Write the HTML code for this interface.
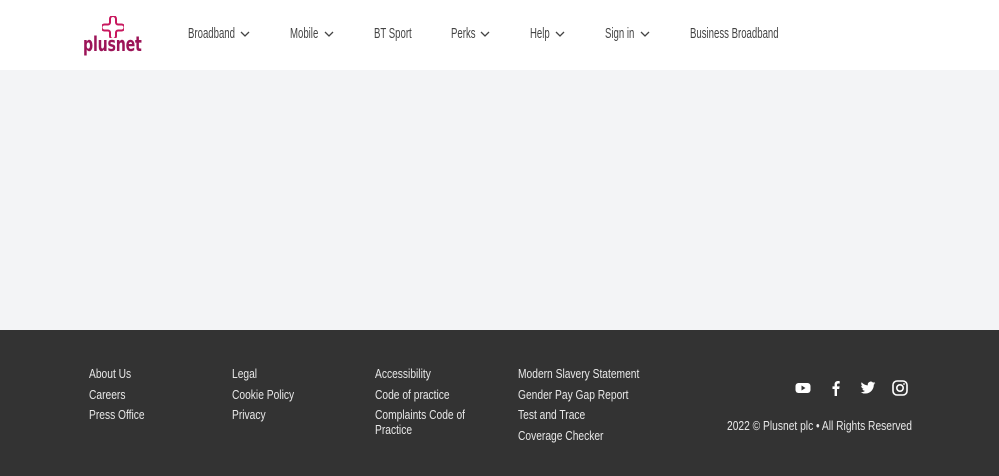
<!DOCTYPE html>
<html><head><meta charset="utf-8"><style>
*{margin:0;padding:0;box-sizing:border-box}
body{width:999px;height:476px;overflow:hidden;font-family:"Liberation Sans",sans-serif;background:#f3f4f6}
.hdr{position:absolute;left:0;top:0;width:999px;height:70px;background:#fff}
.logo-t{position:absolute;left:83px;top:32px;font-size:20px;font-weight:bold;color:#9c1458;font-family:"DejaVu Sans","Liberation Sans",sans-serif;transform:scaleX(0.71);transform-origin:left top;letter-spacing:-0.3px;white-space:nowrap}
.nav{position:absolute;top:25px;font-size:15px;color:#444;transform:scaleX(0.64);transform-origin:left top;white-space:nowrap}
.chev{position:absolute;top:31px}
.body{position:absolute;left:0;top:70px;width:999px;height:260px;background:#f3f4f6}
.ft{position:absolute;left:0;top:330px;width:999px;height:146px;background:#333;color:#e8e8e8;font-size:12.5px}
.col{position:absolute;top:34px;line-height:20.5px;transform:scaleX(0.82);transform-origin:left top}
.col div{white-space:nowrap}
.ic{position:absolute;top:50px}
.copy{position:absolute;left:727px;top:89px;font-size:12.5px;transform:scaleX(0.82);transform-origin:left top;white-space:nowrap}
</style></head><body>
<div class="hdr">
 <svg style="position:absolute;left:102px;top:16px" width="22" height="22" viewBox="0 0 22 22"><path d="M8 2.5 a3 3 0 0 1 6 0 V6 a2 2 0 0 0 2 2 h3.5 a3 3 0 0 1 0 6 H16 a2 2 0 0 0-2 2 v3.5 a3 3 0 0 1-6 0 V16 a2 2 0 0 0-2-2 H2.5 a3 3 0 0 1 0-6 H6 a2 2 0 0 0 2-2z" transform="translate(0 0.5)" fill="none" stroke="#c8185e" stroke-width="2"/></svg>
 <div class="logo-t">plusnet</div>
 <div class="nav" style="left:188px">Broadband</div>
 <div class="nav" style="left:290px">Mobile</div>
 <div class="nav" style="left:374px">BT Sport</div>
 <div class="nav" style="left:451px">Perks</div>
 <div class="nav" style="left:530px">Help</div>
 <div class="nav" style="left:605px">Sign in</div>
 <div class="nav" style="left:690px">Business Broadband</div>
 <svg class="chev" style="left:240px" width="10" height="6"><path d="M1 1l4 4 4-4" fill="none" stroke="#444" stroke-width="1.3"/></svg>
 <svg class="chev" style="left:324px" width="10" height="6"><path d="M1 1l4 4 4-4" fill="none" stroke="#444" stroke-width="1.3"/></svg>
 <svg class="chev" style="left:480px" width="10" height="6"><path d="M1 1l4 4 4-4" fill="none" stroke="#444" stroke-width="1.3"/></svg>
 <svg class="chev" style="left:555px" width="10" height="6"><path d="M1 1l4 4 4-4" fill="none" stroke="#444" stroke-width="1.3"/></svg>
 <svg class="chev" style="left:640px" width="10" height="6"><path d="M1 1l4 4 4-4" fill="none" stroke="#444" stroke-width="1.3"/></svg>
</div>
<div class="body"></div>
<div class="ft">
 <div class="col" style="left:89px"><div>About Us</div><div>Careers</div><div>Press Office</div></div>
 <div class="col" style="left:232px"><div>Legal</div><div>Cookie Policy</div><div>Privacy</div></div>
 <div class="col" style="left:375px"><div>Accessibility</div><div>Code of practice</div><div style="line-height:15px;margin-top:3px">Complaints Code of<br>Practice</div></div>
 <div class="col" style="left:518px"><div>Modern Slavery Statement</div><div>Gender Pay Gap Report</div><div>Test and Trace</div><div>Coverage Checker</div></div>
 <svg class="ic" style="left:795px" width="16" height="16" viewBox="0 0 16 16"><rect x="0.5" y="3" width="15" height="10" rx="3" fill="#fff"/><path d="M6.5 5.5v5l4-2.5z" fill="#333"/></svg>
 <svg class="ic" style="left:830px" width="12" height="16" viewBox="0 0 12 16"><path d="M7 16V9h2.2l.4-2.6H7V4.8c0-.8.3-1.3 1.4-1.3h1.3V1.2C9.4 1.1 8.7 1 7.9 1 6 1 4.6 2.2 4.6 4.3v2.1H2.5V9h2.1v7z" fill="#fff"/></svg>
 <svg class="ic" style="left:860px" width="16" height="16" viewBox="0 0 24 24"><path d="M23 4.6a9 9 0 0 1-2.6.7 4.5 4.5 0 0 0 2-2.5 9 9 0 0 1-2.9 1.1A4.5 4.5 0 0 0 11.8 8 12.8 12.8 0 0 1 2.5 3.3a4.5 4.5 0 0 0 1.4 6 4.5 4.5 0 0 1-2-.6 4.5 4.5 0 0 0 3.6 4.5 4.5 4.5 0 0 1-2 .1 4.5 4.5 0 0 0 4.2 3.1A9 9 0 0 1 1 18.3 12.8 12.8 0 0 0 7.9 20.3c8.3 0 12.8-6.9 12.8-12.8v-.6A9 9 0 0 0 23 4.6z" fill="#fff"/></svg>
 <svg class="ic" style="left:892px" width="16" height="16" viewBox="0 0 16 16"><rect x="1" y="1" width="14" height="14" rx="4" fill="none" stroke="#fff" stroke-width="1.6"/><circle cx="8" cy="8" r="3.2" fill="none" stroke="#fff" stroke-width="1.6"/><circle cx="12" cy="4" r="0.9" fill="#fff"/></svg>
 <div class="copy">2022 © Plusnet plc • All Rights Reserved</div>
</div>
</body></html>
